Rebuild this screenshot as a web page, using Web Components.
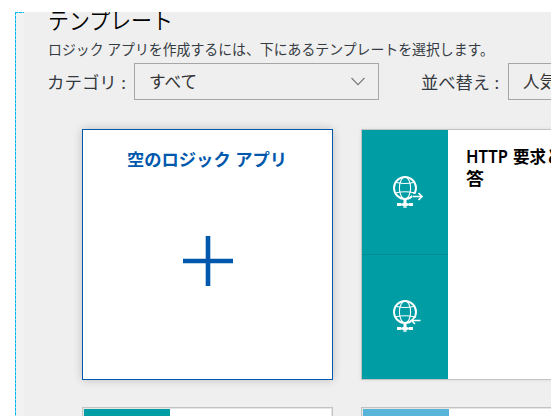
<!DOCTYPE html>
<html lang="ja"><head><meta charset="utf-8"><title>テンプレート</title>
<style>
html,body{margin:0;height:100%;overflow:hidden;background:#fff}
body{font-family:"Noto Sans","Noto Sans CJK JP",sans-serif}
</style></head><body>
<template-page></template-page>
<script>
const define=(name,html,after)=>customElements.define(name,class extends HTMLElement{
  connectedCallback(){
    if(this.shadowRoot)return;
    this.attachShadow({mode:"open"}).innerHTML=html;
    if(after)after(this,this.shadowRoot);
  }
});

/* One line of text condensed or widened to the width given by its "w" attribute. */
define("fit-text",`<style>
:host{display:block;white-space:nowrap;flex:none}
span{display:inline-block;transform-origin:0 50%;vertical-align:top}
</style><span><slot></slot></span>`,(el,root)=>{
  const w=+el.getAttribute("w"),s=root.querySelector("span");
  const n=s.getBoundingClientRect().width;
  el.style.width=w+"px";
  s.style.transform="scaleX("+w/n+")";
});

define("drop-down",`<style>
:host{display:flex;align-items:center;justify-content:space-between;box-sizing:border-box;width:245px;height:37px;flex:none;border:1px solid #a6a6a6;padding:1px 12px 0 14px;color:#333}
svg{display:block}
</style><slot></slot><svg width="16" height="10" viewBox="0 0 16 10"><path d="M1.5 1 8 7.7 14.5 1" fill="none" stroke="#777" stroke-width="1.1"/></svg>`);

define("globe-icon",`<style>:host{display:block;width:32px;height:36px}svg{display:block}</style>
<svg width="32" height="36" viewBox="0 0 32 36" fill="none" stroke="#fff">
<circle cx="13" cy="13" r="11" stroke-width="1.9"/>
<g stroke-width="1.1"><ellipse cx="13" cy="13" rx="5.6" ry="11"/><path d="M4.5 7.5Q13 9.5 21.5 7.5M4 17.8Q13 15.8 22 17.8"/></g>
<path d="M13 24v4" stroke-width="3"/>
<path d="M5 29.5h4M10.5 29.5h5M17 29.5h4" stroke-width="3"/><path d="M9 29.5h8" stroke-width="2"/><path d="M11.3 32h3.4" stroke-width="1.5"/>
<path id="gap" stroke="#009da5" stroke-width="5"/><path id="arrow" stroke-width="1.6"/></svg>`,(el,root)=>{
  const out=el.getAttribute("dir")==="out";
  root.getElementById("gap").setAttribute("d",out?"M20 21.5H27":"M19.5 21.5H27");
  root.getElementById("arrow").setAttribute("d",out?"M20.5 21.5H30M26.5 18l3.5 3.5-3.5 3.5":"M28.5 21.5H19.5M23 18l-3.5 3.5 3.5 3.5");
});

define("icon-cell",`<style>:host{display:block;box-sizing:border-box;height:124px;flex:none;padding:45px 0 0 30px;background:#009da5}
:host(:not(:first-child)){height:125px;border-top:1px solid #008b93;padding-top:44px}</style><slot></slot>`);

define("template-card",`<style>
:host{display:flex;box-sizing:border-box;width:251px;height:251px;background:#fff;border:1px solid #c3c3c3;box-shadow:0 0 4px rgba(0,0,0,.08)}
:host([blank]){flex-direction:column;align-items:center;border-color:#0058ad;box-shadow:0 0 9px rgba(0,0,0,.2)}
:host([peek]){box-shadow:inset 0 0 0 1px #e6e6e6;padding:1px}
.side{display:flex;flex-direction:column;width:86px;flex:none;background:var(--side,#009da5)}
:host([blank]) .side{display:none}
.body{padding:16px 0 0 18px}
:host([blank]) .body{padding:17px 0 0;display:flex;flex-direction:column;align-items:center}
</style><div class="side"><slot name="side"></slot></div><div class="body"><slot></slot></div>`);

define("template-page",`<style>
:host{display:block;width:551px;height:416px;box-sizing:border-box;padding:12px 0 0 15px;overflow:hidden}
main{position:relative;box-sizing:border-box;width:536px;height:404px;background:linear-gradient(90deg,#f2f2f2 9px,#efefef 9px);padding-left:33px;overflow:hidden}
.guide{position:absolute;left:0;top:0;width:9px;height:404px;background:repeating-linear-gradient(180deg,#00b7f4 0 3px,#8fdcf5 3px 4px) 0 0/1px 100% no-repeat,repeating-linear-gradient(90deg,#00b7f4 0 3px,#8fdcf5 3px 4px) 0 0/100% 1px no-repeat}
h1,h2,p{margin:0;font-weight:400}
h1{font-size:23px;line-height:24px;height:26px;color:#000;margin-top:-4px;font-weight:350}
p{font-size:14.3px;line-height:20px;height:29px;color:#353b43;padding-top:6px;box-sizing:border-box}
.bar{display:flex;align-items:center;font-size:17px;line-height:26px;color:#333940;width:620px}
.gap{width:43px;flex:none}
.label{width:86px;flex:none;padding-top:3px}
.label fit-text{margin-left:-1px}
.grid{display:grid;grid-template-columns:251px 251px;gap:27px 28px;padding:29px 0 0 34px}
h2{font-size:17px;font-weight:700;line-height:22px}
.row{display:flex;gap:5px}
.latin{font-weight:600}
.blue{color:#0058ad;line-height:26px;margin-left:-1px}
.plus{display:block;margin-top:63px}
</style>
<main>
<div class="guide"></div>
<h1><fit-text w="125">テンプレート</fit-text></h1>
<p><fit-text w="446">ロジック アプリを作成するには、下にあるテンプレートを選択します。</fit-text></p>
<div class="bar"><div class="label"><fit-text w="79">カテゴリ :</fit-text></div><drop-down><fit-text w="48">すべて</fit-text></drop-down><div class="gap"></div><div class="label"><fit-text w="78">並べ替え :</fit-text></div><drop-down><fit-text w="33">人気</fit-text></drop-down></div>
<div class="grid">
<template-card blank><h2 class="blue"><fit-text w="160">空のロジック アプリ</fit-text></h2><svg class="plus" width="50" height="50"><path d="M25 0V50M0 25H50" stroke="#0058ad" stroke-width="4.6"/></svg></template-card>
<template-card><icon-cell slot="side"><globe-icon dir="out"></globe-icon></icon-cell><icon-cell slot="side"><globe-icon dir="in"></globe-icon></icon-cell><h2><div class="row"><fit-text class="latin" w="42">HTTP</fit-text><fit-text w="66">要求と応</fit-text></div><fit-text w="18">答</fit-text></h2></template-card>
<template-card peek></template-card>
<template-card peek style="--side:#59b4d9"></template-card>
</div>
</main>`);
</script></body></html>
